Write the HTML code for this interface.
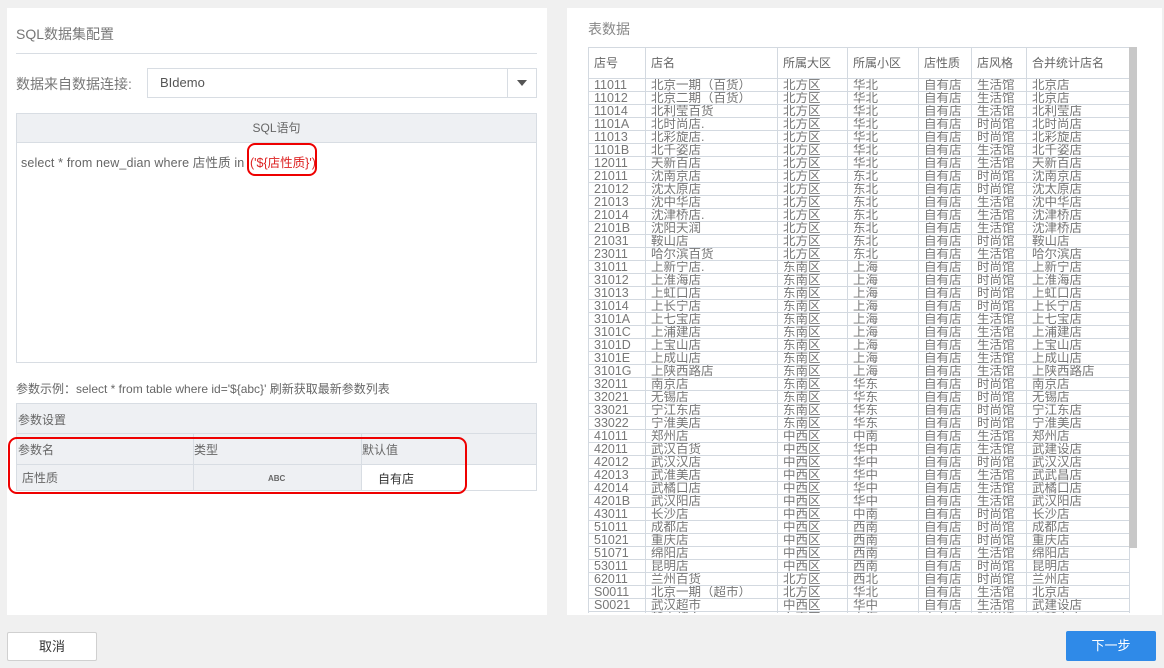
<!DOCTYPE html>
<html><head><meta charset="utf-8"><style>
*{box-sizing:border-box;margin:0;padding:0}
body{width:1164px;height:668px;background:#f0f0f0;font-family:"Liberation Sans","Noto Sans CJK SC",sans-serif;position:relative;overflow:hidden;color:#666}
.abs{position:absolute}
.panel{background:#fff}
table{border-collapse:collapse}
#dt{position:absolute;left:588px;top:47px;width:541px;font-size:12.5px;color:#777;table-layout:fixed}
#dt td,#dt th{border:1px solid #d3d9e0;height:13px;line-height:11px;padding:0 0 0 5px;white-space:nowrap;overflow:hidden;font-weight:normal;text-align:left}
#dt th{height:31px;font-size:12px;color:#666}
</style></head><body>
<div class="abs panel" style="left:7px;top:8px;width:540px;height:607px"></div>
<div class="abs panel" style="left:567px;top:8px;width:595px;height:607px"></div>
<div class="abs" style="left:16px;top:24px;font-size:14px;color:#777">SQL数据集配置</div>
<div class="abs" style="left:16px;top:53px;width:521px;height:1px;background:#d8dde3"></div>
<div class="abs" style="left:16px;top:74px;font-size:14px;color:#777">数据来自数据连接:</div>
<div class="abs" style="left:147px;top:68px;width:390px;height:30px;border:1px solid #d8dde3"></div>
<div class="abs" style="left:160px;top:75px;font-size:13px;color:#555">BIdemo</div>
<div class="abs" style="left:507px;top:69px;width:1px;height:28px;background:#d8dde3"></div>
<div class="abs" style="left:517px;top:80px;width:0;height:0;border-left:5px solid transparent;border-right:5px solid transparent;border-top:6px solid #555"></div>
<div class="abs" style="left:16px;top:113px;width:521px;height:250px;border:1px solid #d8dde3"></div>
<div class="abs" style="left:17px;top:114px;width:519px;height:29px;background:#eef0f3;border-bottom:1px solid #d8dde3;text-align:center;line-height:29px;font-size:12px">SQL语句</div>
<div class="abs" style="left:21px;top:152px;font-size:12.5px;color:#666;letter-spacing:0.15px">select * from new_dian where 店性质 in</div>
<div class="abs" style="left:250px;top:152px;font-size:12.5px;color:#d22">('${店性质}')</div>
<div class="abs" style="left:247px;top:143px;width:70px;height:33px;border:2px solid #e00;border-radius:8px"></div>
<div class="abs" style="left:16px;top:380px;font-size:12px;color:#666">参数示例：select * from table where id='${abc}' 刷新获取最新参数列表</div>
<div class="abs" style="left:16px;top:403px;width:521px;height:88px;border:1px solid #d8dde3;background:#eef0f3"></div>
<div class="abs" style="left:18px;top:411px;font-size:12px">参数设置</div>
<div class="abs" style="left:17px;top:433px;width:519px;height:1px;background:#d8dde3"></div>
<div class="abs" style="left:17px;top:464px;width:519px;height:1px;background:#d8dde3"></div>
<div class="abs" style="left:193px;top:433px;width:1px;height:57px;background:#d8dde3"></div>
<div class="abs" style="left:361px;top:433px;width:1px;height:57px;background:#d8dde3"></div>
<div class="abs" style="left:362px;top:465px;width:174px;height:25px;background:#fff"></div>
<div class="abs" style="left:18px;top:441px;font-size:12px">参数名</div>
<div class="abs" style="left:194px;top:441px;font-size:12px">类型</div>
<div class="abs" style="left:362px;top:441px;font-size:12px">默认值</div>
<div class="abs" style="left:22px;top:469px;font-size:12px">店性质</div>
<div class="abs" style="left:268px;top:474px;font-size:8px;font-weight:bold;color:#666">ABC</div>
<div class="abs" style="left:378px;top:470px;font-size:12px;color:#333">自有店</div>
<div class="abs" style="left:8px;top:437px;width:459px;height:57px;border:2px solid #e00;border-radius:9px"></div>
<div class="abs" style="left:588px;top:19px;font-size:14px;color:#888">表数据</div>
<div class="abs" style="left:567px;top:47px;width:595px;height:566px;overflow:hidden">
<table id="dt" style="left:21px;top:0">
<colgroup><col style="width:57px"><col style="width:132px"><col style="width:70px"><col style="width:71px"><col style="width:53px"><col style="width:55px"><col style="width:103px"></colgroup>
<tr><th>店号</th><th>店名</th><th>所属大区</th><th>所属小区</th><th>店性质</th><th>店风格</th><th>合并统计店名</th></tr>
<tr><td>11011</td><td>北京一期（百货）</td><td>北方区</td><td>华北</td><td>自有店</td><td>生活馆</td><td>北京店</td></tr>
<tr><td>11012</td><td>北京二期（百货）</td><td>北方区</td><td>华北</td><td>自有店</td><td>生活馆</td><td>北京店</td></tr>
<tr><td>11014</td><td>北利莹百货</td><td>北方区</td><td>华北</td><td>自有店</td><td>生活馆</td><td>北利莹店</td></tr>
<tr><td>1101A</td><td>北时尚店.</td><td>北方区</td><td>华北</td><td>自有店</td><td>时尚馆</td><td>北时尚店</td></tr>
<tr><td>11013</td><td>北彩旋店.</td><td>北方区</td><td>华北</td><td>自有店</td><td>时尚馆</td><td>北彩旋店</td></tr>
<tr><td>1101B</td><td>北千姿店</td><td>北方区</td><td>华北</td><td>自有店</td><td>生活馆</td><td>北千姿店</td></tr>
<tr><td>12011</td><td>天新百店</td><td>北方区</td><td>华北</td><td>自有店</td><td>生活馆</td><td>天新百店</td></tr>
<tr><td>21011</td><td>沈南京店</td><td>北方区</td><td>东北</td><td>自有店</td><td>时尚馆</td><td>沈南京店</td></tr>
<tr><td>21012</td><td>沈太原店</td><td>北方区</td><td>东北</td><td>自有店</td><td>时尚馆</td><td>沈太原店</td></tr>
<tr><td>21013</td><td>沈中华店</td><td>北方区</td><td>东北</td><td>自有店</td><td>生活馆</td><td>沈中华店</td></tr>
<tr><td>21014</td><td>沈津桥店.</td><td>北方区</td><td>东北</td><td>自有店</td><td>生活馆</td><td>沈津桥店</td></tr>
<tr><td>2101B</td><td>沈阳天润</td><td>北方区</td><td>东北</td><td>自有店</td><td>生活馆</td><td>沈津桥店</td></tr>
<tr><td>21031</td><td>鞍山店</td><td>北方区</td><td>东北</td><td>自有店</td><td>时尚馆</td><td>鞍山店</td></tr>
<tr><td>23011</td><td>哈尔滨百货</td><td>北方区</td><td>东北</td><td>自有店</td><td>生活馆</td><td>哈尔滨店</td></tr>
<tr><td>31011</td><td>上新宁店.</td><td>东南区</td><td>上海</td><td>自有店</td><td>时尚馆</td><td>上新宁店</td></tr>
<tr><td>31012</td><td>上淮海店</td><td>东南区</td><td>上海</td><td>自有店</td><td>时尚馆</td><td>上淮海店</td></tr>
<tr><td>31013</td><td>上虹口店</td><td>东南区</td><td>上海</td><td>自有店</td><td>时尚馆</td><td>上虹口店</td></tr>
<tr><td>31014</td><td>上长宁店</td><td>东南区</td><td>上海</td><td>自有店</td><td>时尚馆</td><td>上长宁店</td></tr>
<tr><td>3101A</td><td>上七宝店</td><td>东南区</td><td>上海</td><td>自有店</td><td>生活馆</td><td>上七宝店</td></tr>
<tr><td>3101C</td><td>上浦建店</td><td>东南区</td><td>上海</td><td>自有店</td><td>生活馆</td><td>上浦建店</td></tr>
<tr><td>3101D</td><td>上宝山店</td><td>东南区</td><td>上海</td><td>自有店</td><td>生活馆</td><td>上宝山店</td></tr>
<tr><td>3101E</td><td>上成山店</td><td>东南区</td><td>上海</td><td>自有店</td><td>生活馆</td><td>上成山店</td></tr>
<tr><td>3101G</td><td>上陕西路店</td><td>东南区</td><td>上海</td><td>自有店</td><td>生活馆</td><td>上陕西路店</td></tr>
<tr><td>32011</td><td>南京店</td><td>东南区</td><td>华东</td><td>自有店</td><td>时尚馆</td><td>南京店</td></tr>
<tr><td>32021</td><td>无锡店</td><td>东南区</td><td>华东</td><td>自有店</td><td>时尚馆</td><td>无锡店</td></tr>
<tr><td>33021</td><td>宁江东店</td><td>东南区</td><td>华东</td><td>自有店</td><td>时尚馆</td><td>宁江东店</td></tr>
<tr><td>33022</td><td>宁淮美店</td><td>东南区</td><td>华东</td><td>自有店</td><td>时尚馆</td><td>宁淮美店</td></tr>
<tr><td>41011</td><td>郑州店</td><td>中西区</td><td>中南</td><td>自有店</td><td>生活馆</td><td>郑州店</td></tr>
<tr><td>42011</td><td>武汉百货</td><td>中西区</td><td>华中</td><td>自有店</td><td>生活馆</td><td>武建设店</td></tr>
<tr><td>42012</td><td>武汉汉店</td><td>中西区</td><td>华中</td><td>自有店</td><td>时尚馆</td><td>武汉汉店</td></tr>
<tr><td>42013</td><td>武淮美店</td><td>中西区</td><td>华中</td><td>自有店</td><td>生活馆</td><td>武武昌店</td></tr>
<tr><td>42014</td><td>武橘口店</td><td>中西区</td><td>华中</td><td>自有店</td><td>生活馆</td><td>武橘口店</td></tr>
<tr><td>4201B</td><td>武汉阳店</td><td>中西区</td><td>华中</td><td>自有店</td><td>生活馆</td><td>武汉阳店</td></tr>
<tr><td>43011</td><td>长沙店</td><td>中西区</td><td>中南</td><td>自有店</td><td>时尚馆</td><td>长沙店</td></tr>
<tr><td>51011</td><td>成都店</td><td>中西区</td><td>西南</td><td>自有店</td><td>时尚馆</td><td>成都店</td></tr>
<tr><td>51021</td><td>重庆店</td><td>中西区</td><td>西南</td><td>自有店</td><td>时尚馆</td><td>重庆店</td></tr>
<tr><td>51071</td><td>绵阳店</td><td>中西区</td><td>西南</td><td>自有店</td><td>生活馆</td><td>绵阳店</td></tr>
<tr><td>53011</td><td>昆明店</td><td>中西区</td><td>西南</td><td>自有店</td><td>时尚馆</td><td>昆明店</td></tr>
<tr><td>62011</td><td>兰州百货</td><td>北方区</td><td>西北</td><td>自有店</td><td>时尚馆</td><td>兰州店</td></tr>
<tr><td>S0011</td><td>北京一期（超市）</td><td>北方区</td><td>华北</td><td>自有店</td><td>生活馆</td><td>北京店</td></tr>
<tr><td>S0021</td><td>武汉超市</td><td>中西区</td><td>华中</td><td>自有店</td><td>生活馆</td><td>武建设店</td></tr>
<tr><td>S0041</td><td>新宁超市</td><td>东南区</td><td>上海</td><td>自有店</td><td>时尚馆</td><td>上新宁店</td></tr>
</table>
<div class="abs" style="left:562px;top:0;width:8px;height:501px;background:#c8c8c8"></div>
</div>
<div class="abs" style="left:7px;top:632px;width:90px;height:29px;background:#fff;border:1px solid #d0d0d0;border-radius:2px;text-align:center;line-height:27px;font-size:13px;color:#333">取消</div>
<div class="abs" style="left:1066px;top:631px;width:90px;height:30px;background:#2f8ae8;border-radius:2px;text-align:center;line-height:30px;font-size:13px;color:#fff">下一步</div>
</body></html>
